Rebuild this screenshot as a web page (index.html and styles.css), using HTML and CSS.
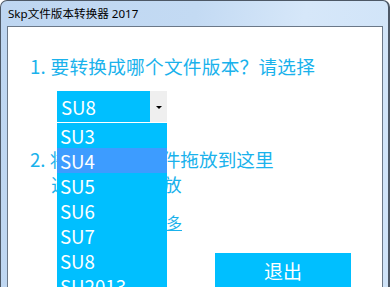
FILE: index.html
```html
<!DOCTYPE html>
<html lang="zh">
<head>
<meta charset="utf-8">
<title>Skp文件版本转换器 2017</title>
<link rel="stylesheet" href="styles.css">
</head>
<body>
<div class="window">
  <div class="titlebar">Skp文件版本转换器 2017</div>
  <div class="client">
    <div class="step step1">1. 要转换成哪个文件版本？请选择</div>
    <div class="combo">
      <div class="combo-value">SU8</div>
      <div class="combo-arrow"><span class="tri"></span></div>
      <ul class="dropdown">
        <li>SU3</li>
        <li class="hl">SU4</li>
        <li>SU5</li>
        <li>SU6</li>
        <li>SU7</li>
        <li>SU8</li>
        <li>SU2013</li>
      </ul>
    </div>
    <div class="step step2">2. 将要转换的文件拖放到这里<br><span class="indent">选择后即可存放</span></div>
    <a class="more" href="#">了解更多</a>
    <div class="actions">
      <button class="exit">退出</button>
    </div>
  </div>
</div>
</body>
</html>
```

FILE: styles.css
```css
html, body {
  margin: 0;
  padding: 0;
  background: #ffffff;
}
body {
  width: 390px;
  height: 298px;
  overflow: hidden;
  font-family: "Noto Sans", "Noto Sans CJK SC", sans-serif;
}
.window {
  box-sizing: border-box;
  width: 390px;
  height: 287px;
  overflow: hidden;
  border: 1px solid #4d5866;
  border-bottom: none;
  border-right-width: 2px;
  border-radius: 7px 7px 0 0;
  background: linear-gradient(100deg, #bed6f1 0%, #c3daf3 45%, #d6e7f9 70%, #cfe3f8 100%);
  padding: 0 5px 0 6px;
  display: flex;
  flex-direction: column;
}
.titlebar {
  height: 28px;
  box-sizing: border-box;
  padding: 5px 0 0 1px;
  font-size: 11.6px;
  line-height: 16px;
  color: #000000;
}
.client {
  flex: 1;
  background: #ffffff;
  border: 1px solid #6b7888;
  border-bottom: none;
  padding: 26px 0 0 22px;
  display: flex;
  flex-direction: column;
  align-items: flex-start;
}
.step {
  font-family: "Noto Sans CJK SC", sans-serif;
  font-size: 18.67px;
  line-height: 25px;
  color: #1ab2ec;
}
.step1 {
  letter-spacing: 0.25px;
}
.combo {
  position: relative;
  margin: 13px 0 0 27px;
  width: 110px;
  height: 31px;
  display: flex;
}
.combo-value {
  width: 93px;
  background: #00bfff;
  color: #ffffff;
  font-family: "Noto Sans CJK SC", sans-serif;
  font-size: 18.67px;
  line-height: 31px;
  padding-left: 4px;
  box-sizing: border-box;
}
.combo-arrow {
  flex: 1;
  background: #efefef;
  display: flex;
  align-items: center;
  justify-content: center;
}
.tri {
  width: 0;
  height: 0;
  border-left: 3px solid transparent;
  border-right: 3px solid transparent;
  border-top: 3px solid #000000;
  margin-top: 1px;
}
.dropdown {
  position: absolute;
  top: 32px;
  left: 0;
  width: 110px;
  margin: 0;
  padding: 0;
  list-style: none;
  background: #00bfff;
  z-index: 2;
}
.dropdown li {
  height: 25px;
  line-height: 25px;
  padding-left: 3px;
  color: #ffffff;
  font-family: "Noto Sans CJK SC", sans-serif;
  font-size: 18.67px;
}
.dropdown li.hl {
  background: #3d9cff;
}
.step2 {
  margin-top: 24px;
}
.indent {
  padding-left: 21px;
}
.more {
  margin: 16px 0 0 88px;
  font-family: "Noto Sans CJK SC", sans-serif;
  font-size: 16px;
  line-height: 20px;
  color: #1ab2ec;
  text-decoration: underline;
}
.actions {
  margin: 21px 0 0 185px;
}
.exit {
  width: 136px;
  height: 34px;
  border: none;
  background: #00bfff;
  color: #ffffff;
  font-family: "Noto Sans CJK SC", sans-serif;
  font-size: 19px;
  padding: 0;
  line-height: 31px;
  display: block;
}
```
